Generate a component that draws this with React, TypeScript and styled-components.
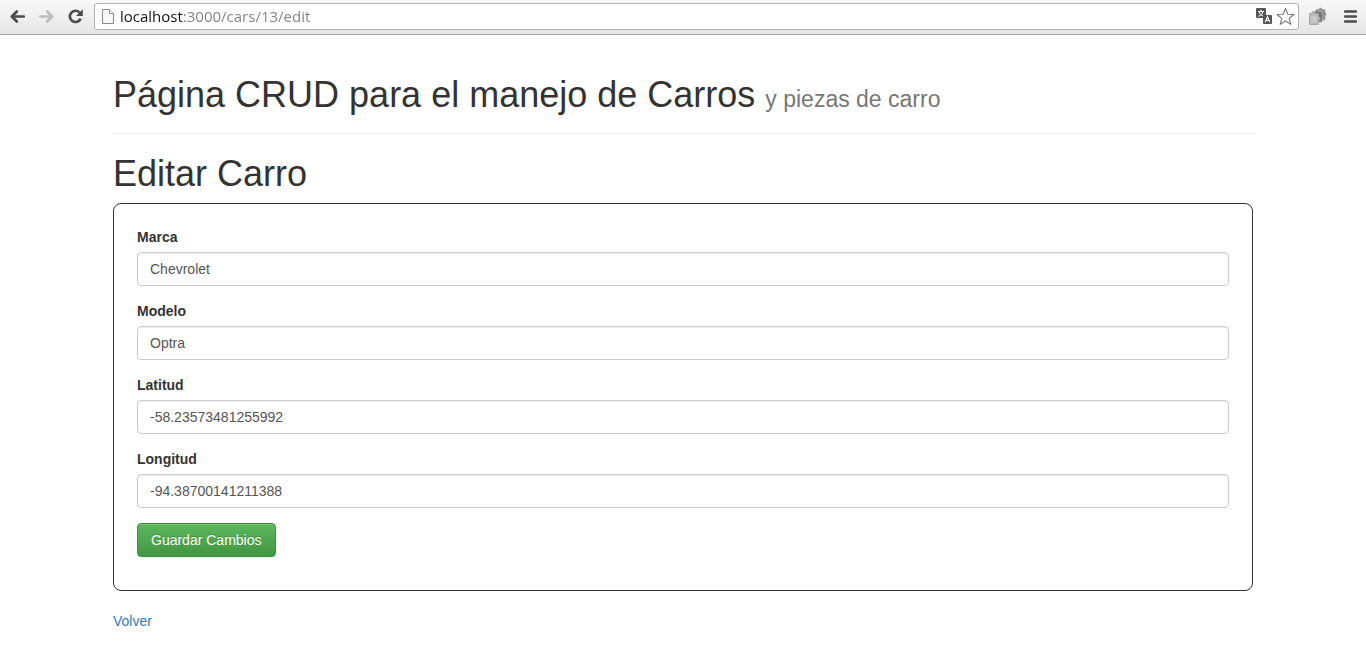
import React from "react";
import styled, { createGlobalStyle } from "styled-components";

const GlobalStyle = createGlobalStyle`
  *, *::before, *::after { box-sizing: border-box; }
  body {
    margin: 0;
    background: #fff;
    color: #333;
    font-family: "Liberation Sans", Arial, sans-serif;
    font-size: 14px;
    line-height: 20px;
  }
`;

const Toolbar = styled.header`
  display: flex;
  align-items: center;
  gap: 4px;
  height: 35px;
  padding: 3px 1px 4px 3px;
  background: linear-gradient(#f8f8f8, #e6e6e6);
  border-bottom: 1px solid #a9a9a9;
`;

const NavButtons = styled.nav`
  display: flex;
`;

const IconButton = styled.button<{ $wide?: boolean }>`
  display: flex;
  align-items: center;
  justify-content: center;
  flex: none;
  width: ${(p) => (p.$wide ? "29px" : "17px")};
  height: 27px;
  padding: 0;
  border: 0;
  background: none;
`;

const Icon = styled.svg`
  display: block;
  flex: none;
  width: 17px;
  height: 17px;
  overflow: visible;
`;

const AddressBar = styled.div`
  display: flex;
  flex: 1;
  align-items: center;
  gap: 4px;
  min-width: 0;
  height: 27px;
  padding: 0 4px;
  background: #fff;
  border: 1px solid #b2b2b2;
  border-radius: 3px;
`;

const AddressInput = styled.input`
  flex: 1;
  min-width: 0;
  height: 25px;
  padding: 0 0 2px;
  border: 0;
  outline: 0;
  font-family: "Open Sans", "Segoe UI", sans-serif;
  font-size: 15px;
  color: #808080;
  background: linear-gradient(90deg, #111 63px, #808080 63px);
  background-clip: text;
  -webkit-text-fill-color: transparent;
`;

const Container = styled.main`
  max-width: 1170px;
  margin: 0 auto;
  padding: 0 15px;
`;

const PageHeader = styled.div`
  margin: 40px 0 20px;
  padding-bottom: 9px;
  border-bottom: 1px solid #eee;
`;

const Title = styled.h1`
  margin: 0 0 9px;
  font-size: 36px;
  font-weight: 500;
  line-height: 40px;
`;

const Subtitle = styled.small`
  font-size: 23px;
  font-weight: 400;
  line-height: 1;
  color: #777;
`;

const CarForm = styled.form`
  margin-bottom: 20px;
  padding: 23px 23px 33px;
  border: 1px solid #333;
  border-radius: 8px;
`;

const Field = styled.div`
  margin-bottom: 15px;
`;

const Label = styled.label`
  display: block;
  margin-bottom: 5px;
  font-weight: 700;
`;

const TextInput = styled.input`
  display: block;
  width: 100%;
  height: 34px;
  padding: 6px 12px;
  border: 1px solid #ccc;
  border-radius: 4px;
  background: #fff;
  box-shadow: inset 0 1px 1px rgba(0, 0, 0, 0.075);
  color: #555;
  font: inherit;
`;

const SubmitButton = styled.button`
  display: block;
  height: 34px;
  padding: 6px 13px;
  border: 1px solid #3e8f3e;
  border-radius: 4px;
  background: linear-gradient(#5cb85c, #419641);
  box-shadow: inset 0 1px 0 rgba(255, 255, 255, 0.15), 0 1px 1px rgba(0, 0, 0, 0.075);
  color: #fff;
  font: inherit;
  text-shadow: 0 -1px 0 rgba(0, 0, 0, 0.2);
`;

const BackLink = styled.a`
  color: #337ab7;
  text-decoration: none;
`;

const ArrowIcon = ({ color, flip }: { color: string; flip?: boolean }) => (
  <Icon viewBox="0 0 17 17" aria-hidden="true">
    <path
      d={flip ? "M2.2 8.5H14M9.2 3.5l5 5-5 5" : "M14.8 8.5H3M7.8 3.5l-5 5 5 5"}
      fill="none"
      stroke={color}
      strokeWidth="2.7"
      strokeLinecap="round"
      strokeLinejoin="round"
    />
  </Icon>
);

const ReloadIcon = () => (
  <Icon viewBox="0 0 17 17" aria-hidden="true">
    <path d="M12.6 4.6A5.6 5.6 0 1 0 13.6 10.6" fill="none" stroke="#4c4c4c" strokeWidth="2.7" />
    <path d="M15.8 1.2V8H9z" fill="#4c4c4c" />
  </Icon>
);

const PageIcon = () => (
  <Icon viewBox="0 0 17 17" aria-hidden="true">
    <path d="M3.5 1.5h7l4 4v10h-11z" fill="#f7f7f7" stroke="#8c8c8c" />
    <path d="M10.5 1.5v4h4" fill="#fff" stroke="#8c8c8c" />
  </Icon>
);

const TranslateIcon = () => (
  <Icon viewBox="0 0 17 17" aria-hidden="true">
    <rect x="0" y="0" width="10" height="10" rx="1" fill="#555" />
    <path
      d="M5 1.6v1.6M2 3.5h6M3.2 4c.7 2.2 2.2 3.500 4.600 4.300M6.800 4C6.200 6.200 4.600 7.600 2.200 8.300"
      fill="none"
      stroke="#fff"
    />
    <rect x="7" y="7" width="9" height="9" rx="1" fill="#555" />
    <path d="M9.2 14.300l2.300-5.500 2.300 5.500M10 12.500h3" fill="none" stroke="#fff" strokeWidth="1.200" />
  </Icon>
);

const StarIcon = () => (
  <Icon viewBox="0 0 17 17" aria-hidden="true">
    <path
      d="M8.5 0.4l2.300 5.800 6.200.3-4.800 3.900 1.600 6-5.300-3.400-5.300 3.400 1.600-6L0 6.500l6.200-.3z"
      fill="#fff"
      stroke="#777"
      strokeWidth="1.100"
      strokeLinejoin="round"
    />
  </Icon>
);

const ExtensionIcon = () => (
  <Icon viewBox="0 0 17 17" aria-hidden="true">
    <path d="M7 1.500h3.200V0h2.600v1.500H16v3.200h1v2.800h-1V12H7z" fill="#8f8f8f" stroke="#aaa" strokeWidth="0.600" />
    <path d="M4 3.500h3V2h2.500v1.500H13v3h1v3h-1V14H4z" fill="#757575" stroke="#b0b0b0" strokeWidth="0.800" />
    <path d="M0.500 5.500H3V4h3v1.500h3.500V9h1.300v3H9.500v4.500h-9z" fill="#b9b9b9" stroke="#9c9c9c" strokeWidth="0.800" />
    <path d="M1.800 8h6v6.500h-6z" fill="#c8c8c8" />
  </Icon>
);

const MenuIcon = () => (
  <Icon viewBox="0 0 17 17" aria-hidden="true">
    <path d="M3.2 3.5h10.600M3.2 8.5h10.600M3.2 13.5h10.600" stroke="#4c4c4c" strokeWidth="2.6" strokeLinecap="round" />
  </Icon>
);

const fields = [
  { id: "marca", label: "Marca", value: "Chevrolet" },
  { id: "modelo", label: "Modelo", value: "Optra" },
  { id: "latitud", label: "Latitud", value: "-58.23573481255992" },
  { id: "longitud", label: "Longitud", value: "-94.38700141211388" },
];

export default function App() {
  return (
    <>
      <GlobalStyle />
      <Toolbar>
        <NavButtons>
          <IconButton $wide type="button" aria-label="Atrás">
            <ArrowIcon color="#4c4c4c" />
          </IconButton>
          <IconButton $wide type="button" aria-label="Adelante" disabled>
            <ArrowIcon color="#bdbdbd" flip />
          </IconButton>
          <IconButton $wide type="button" aria-label="Recargar">
            <ReloadIcon />
          </IconButton>
        </NavButtons>
        <AddressBar>
          <PageIcon />
          <AddressInput aria-label="Dirección" defaultValue="localhost:3000/cars/13/edit" spellCheck={false} />
          <IconButton type="button" aria-label="Traducir">
            <TranslateIcon />
          </IconButton>
          <IconButton type="button" aria-label="Favoritos">
            <StarIcon />
          </IconButton>
        </AddressBar>
        <IconButton $wide type="button" aria-label="Extensión">
          <ExtensionIcon />
        </IconButton>
        <IconButton $wide type="button" aria-label="Menú">
          <MenuIcon />
        </IconButton>
      </Toolbar>
      <Container>
        <PageHeader>
          <Title>
            Página CRUD para el manejo de Carros <Subtitle>y piezas de carro</Subtitle>
          </Title>
        </PageHeader>
        <Title as="h2">Editar Carro</Title>
        <CarForm onSubmit={(e) => e.preventDefault()}>
          {fields.map((f) => (
            <Field key={f.id}>
              <Label htmlFor={f.id}>{f.label}</Label>
              <TextInput id={f.id} type="text" defaultValue={f.value} />
            </Field>
          ))}
          <SubmitButton type="submit">Guardar Cambios</SubmitButton>
        </CarForm>
        <BackLink href="#">Volver</BackLink>
      </Container>
    </>
  );
}
